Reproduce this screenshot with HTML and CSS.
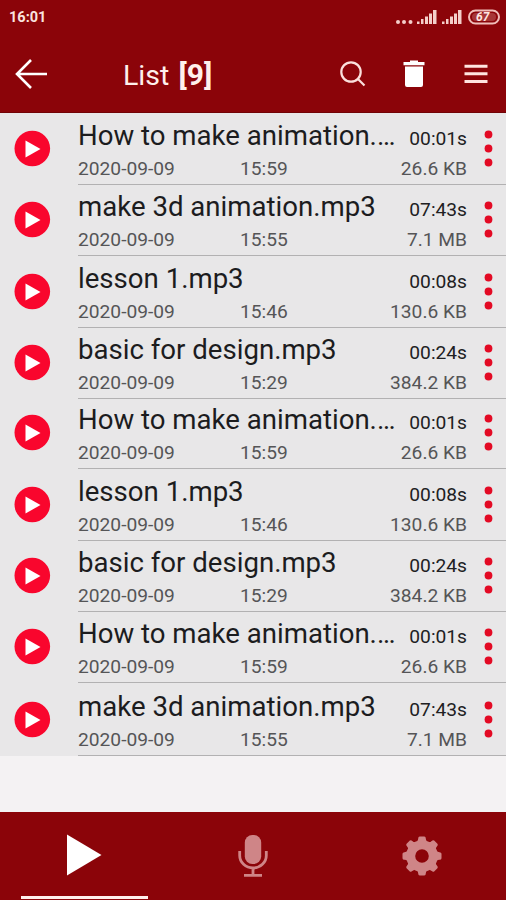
FILE: index.html
```
<!DOCTYPE html>
<html lang="en">
<head>
<meta charset="utf-8">
<title>List</title>
<link rel="stylesheet" href="styles.css">
</head>
<body>
<div class="app">
<header class="header">
  <div class="status">
    <span class="clock">16:01</span>
    <svg class="signals" width="106" height="20" viewBox="0 0 106 20" fill="#f4cfca">
      <circle cx="-2" cy="13" r="2"/><circle cx="4" cy="13" r="2"/><circle cx="10.500" cy="13" r="2"/>
      <path d="M17 15v-2.500h2.500V15zM21 15v-5h2.500V15zM25 15V7.500h3V15zM29 15V4.500h3V15zM33 15V1h3.500v14zM42 15v-2.500h2.500V15zM46 15v-5h2.500V15zM50 15V7.500h3V15zM54 15V4.500h3V15zM58 15V1h3.500v14z"/>
      <rect x="69" y="1.500" width="30" height="13" rx="6.500" fill="none" stroke="#f0bdb9" stroke-width="2"/>
      <path d="M72 8a4 4 0 0 1 4-4h16a4 4 0 0 1 0 8H76a4 4 0 0 1-4-4z" fill="#d99490" opacity=".35"/>
      <text x="76" y="12" class="battery">67</text>
    </svg>
  </div>
  <div class="toolbar">
    <svg class="back" width="34" height="32" viewBox="0 0 34 32"><path d="M16 2L2 16l14 14M2.500 16H32" fill="none" stroke="#fff" stroke-width="2.600"/></svg>
    <h1 class="title">List <b>[9]</b></h1>
    <svg class="search" width="28" height="28" viewBox="0 0 28 28" fill="none" stroke="#fbe0dc" stroke-width="2.200"><circle cx="12" cy="12" r="9.700"/><path d="M18.500 18.500l7 7"/></svg>
    <svg class="trash" width="22" height="28" viewBox="0 0 22 28" fill="#fff"><path d="M7 2V.5h8V2h6.500v3.300H.5V2zM2 6.500h18V25a2 2 0 0 1-2 2H4a2 2 0 0 1-2-2z"/></svg>
    <svg class="menu" width="24" height="20" viewBox="0 0 24 20" fill="#ffe4e0"><path d="M.5.7h23v3H.5zM.5 8.300h23v3H.5zM.5 16h23v3H.5z"/></svg>
  </div>
</header>
<main class="list" id="list"></main>
<nav class="tabs">
  <div class="tab active"><svg width="36" height="44" viewBox="0 0 36 44"><path d="M1 .5v41L35.500 21z" fill="#fff"/></svg></div>
  <div class="tab"><svg width="30" height="44" viewBox="0 0 30 44"><rect x="6.800" y="1" width="16.400" height="29" rx="7.500" fill="#cf8587"/><path d="M1.700 17v4.500a13.300 12.500 0 0 0 26.600 0V17M15 34v7M6 41.300h18" fill="none" stroke="#cf8587" stroke-width="2.800"/></svg></div>
  <div class="tab"><svg width="40" height="40" viewBox="-20 -20 40 40" fill="#cf8587">
    <circle r="11.300" fill="none" stroke="#cf8587" stroke-width="9"/>
    <path id="pair" d="M-5.200-14.500q1.400-1 1.400-3q0-2 1.500-2h4.600q1.500 0 1.500 2q0 2 1.400 3zM-5.200 14.500q1.400 1 1.400 3q0 2 1.500 2h4.600q1.500 0 1.500-2q0-2 1.400-3z"/><use href="#pair" transform="rotate(45)"/><use href="#pair" transform="rotate(90)"/><use href="#pair" transform="rotate(135)"/>
  </svg></div>
</nav>
</div>
<script src="list.js"></script>
</body>
</html>
```
FILE: styles.css
```
* { box-sizing: border-box; }
body { margin: 0; font-family: Roboto, "Liberation Sans", sans-serif; }
.app { width: 506px; height: 900px; display: flex; flex-direction: column; background: #f4f2f3; overflow: hidden; }
.header { height: 113px; flex: none; background: #8b0409; color: #fff; border-bottom: 1px solid #710306; }
.status { height: 36px; padding: 8px 0 0 9px; display: flex; justify-content: space-between; }
.clock { font-size: 14.500px; line-height: 20px; font-weight: 700; color: #fae3df; }
.signals { overflow: visible; margin-top: 1px; }
.battery { font: italic 700 12px Roboto, sans-serif; fill: #ffe6e2; }
.toolbar { height: 76px; display: flex; align-items: center; padding-left: 15px; }
.title { margin: 2px 0 0 74px; width: 216px; font-size: 28.500px; line-height: 36px; font-weight: 400; color: #fff0ec; white-space: nowrap; }
.title b { font-size: 30px; margin-left: 2px; }
.trash { margin-left: 36px; }
.menu { margin-left: 39px; }
.list { flex: none; height: 699px; }
.row { height: 72px; margin-bottom: -1px; display: flex; background: #e8e7e8; }
.row.flush { margin-bottom: 0; }
.row.tight { margin-bottom: -2px; }
.row.loose { margin-bottom: 1px; box-shadow: 0 1px #e8e7e8; }
.play { width: 78px; flex: none; padding: 17px 0 0 14px; }
.play svg { display: block; }
.details { flex: 1; display: grid; grid-template-columns: 162px 1fr auto; grid-template-rows: 45px 26px; border-bottom: 1px solid #b2b1b2; padding-right: 39px; position: relative; }
.name { grid-column: 1 / 3; font-size: 27.600px; line-height: 45px; color: #1c1c1e; white-space: nowrap; }
.duration { font-size: 19.200px; line-height: 51px; color: #202022; text-align: right; justify-self: end; }
.date, .time, .size { font-size: 19.200px; line-height: 22px; color: #555557; white-space: nowrap; }
.size { text-align: right; justify-self: end; }
.more { position: absolute; right: 13px; top: 17px; }
.tabs { flex: 1; display: grid; grid-template-columns: repeat(3, 1fr); background: #8b0409; }
.tab { display: flex; align-items: center; justify-content: center; position: relative; }
.tab.active::after { content: ""; position: absolute; left: 21px; bottom: 1px; width: 127px; height: 3px; background: #fff0ed; }
```
FILE: list.js
```
const lesson = ["lesson 1.mp3", "00:08s", "15:46", "130.6 KB"];
const basics = ["basic for design.mp3", "00:24s", "15:29", "384.2 KB"];
const howTo = ["How to make animation.…", "00:01s", "15:59", "26.6 KB"];
const modeling = ["make 3d animation.mp3", "07:43s", "15:55", "7.1 MB"];
const rows = [
  [howTo, ""], [modeling, "flush"], [lesson, ""], [basics, "tight"], [howTo, "flush"],
  [lesson, ""], [basics, ""], [howTo, "loose"], [modeling, ""]
];
document.getElementById("list").innerHTML = rows.map(([[name, duration, time, size], spacing]) => `
<div class="row ${spacing}">
  <div class="play"><svg width="37" height="37" viewBox="0 0 37 37"><circle cx="18.300" cy="18.500" r="17.800" fill="#f9062d"/><path d="M11.500 10.500v17L26.500 19z" fill="#fff"/></svg></div>
  <div class="details">
    <span class="name">${name}</span><span class="duration">${duration}</span>
    <span class="date">2020-09-09</span><span class="time">${time}</span><span class="size">${size}</span>
    <svg class="more" width="9" height="38" viewBox="0 0 9 38" fill="#e30a24"><circle cx="4.500" cy="4.500" r="3.900"/><circle cx="4.500" cy="18.500" r="3.900"/><circle cx="4.500" cy="32.500" r="3.900"/></svg>
  </div>
</div>`).join("");
```
